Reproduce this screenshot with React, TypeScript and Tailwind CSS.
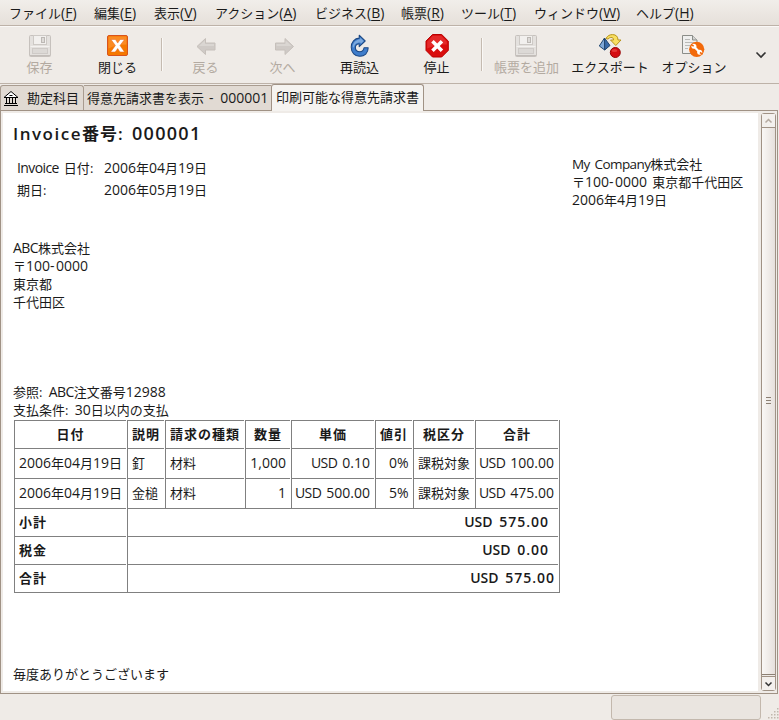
import React from 'react';

/* Digits, letters and kanji/kana run at slightly different sizes and tracking. */
function T({ children, bold, big, tight }: { children: string; bold?: boolean; big?: boolean; tight?: boolean }) {
  const runs = children.match(/-|: ?|[0-9.,]+|[^\x20-\x7e]+|[^0-9.,:\-\u0080-\uffff]+/g) ?? [];
  const digit = big ? 'text-[18px] tracking-[1.3px]' : bold ? 'text-[14px] tracking-[1px]' : 'text-[14px]';
  const latin = big
    ? 'tracking-[1.5px]'
    : bold
      ? 'text-[14px] tracking-[0px] [word-spacing:3px]'
      : tight
        ? 'text-[13.5px] tracking-[-0.6px] [word-spacing:2px]'
        : 'text-[14px] tracking-[-0.6px] [word-spacing:2px]';
  const colon = big ? 'tracking-[1.5px] [word-spacing:2px]' : 'tracking-[0.5px] [word-spacing:2px]';
  const cjk = big || bold ? 'tracking-[1px]' : '';
  const style = (r: string) =>
    r === '-' ? 'text-[14px] tracking-[1.5px]' : r[0] === ':' ? colon : /^[0-9.,]/.test(r) ? digit : r.charCodeAt(0) < 127 ? latin : cjk;
  return (
    <span className="whitespace-pre">
      {runs.map((r, i) => (
        <span key={i} className={style(r)}>{r}</span>
      ))}
    </span>
  );
}

const menus = [
  { t: 'ファイル', k: 'F', w: 'w-[85px]' },
  { t: '編集', k: 'E', w: 'w-[60px]' },
  { t: '表示', k: 'V', w: 'w-[61px]' },
  { t: 'アクション', k: 'A', w: 'w-[100px]' },
  { t: 'ビジネス', k: 'B', w: 'w-[86px]' },
  { t: '帳票', k: 'R', w: 'w-[60px]' },
  { t: 'ツール', k: 'T', w: 'w-[73px]' },
  { t: 'ウィンドウ', k: 'W', w: 'w-[102px]' },
  { t: 'ヘルプ', k: 'H', w: 'w-[70px]' },
];

function Floppy() {
  return (
    <svg width="25" height="24" viewBox="-1 0 25 24">
      <rect x="1.5" y="1.5" width="21" height="21" rx="1" fill="#e4e1de" stroke="#c6c1bd" />
      <rect x="5.5" y="1.5" width="13" height="9" fill="#f2f0ee" stroke="#cdc9c5" />
      <rect x="13.5" y="3.5" width="3" height="5" fill="#dedbd8" stroke="#bcb8b4" />
      <path d="M2.5 12.5h19" stroke="#f4f2f0" />
      <rect x="4.5" y="14.5" width="15" height="5" fill="#dcd9d6" stroke="#cecac7" />
      <path d="M2 21.5h20" stroke="#c2bdb9" />
    </svg>
  );
}
function CloseIcon() {
  return (
    <svg width="25" height="24" viewBox="-1 0 25 24">
      <rect x="1.5" y="1.5" width="20" height="20" rx="1.5" fill="#f57900" stroke="#d9531c" />
      <path d="M2.500 2.500h18v8c-6 0-12 1-18 4z" fill="#ff9a42" opacity=".55" />
      <path d="M5 5.500h4.500l2.200 3.600 2.400-3.600h4.400l-4.500 6 4.500 6.500H14l-2.300-3.500L9.200 18H4.700l4.700-6.500z" fill="#fff" stroke="#e8641a" strokeWidth=".5" />
    </svg>
  );
}
function Arrow({ flip }: { flip?: boolean }) {
  return (
    <svg width="25" height="24" viewBox="-1 0 25 24">
      <g transform={flip ? 'matrix(-1 0 0 1 25.5 0)' : undefined}>
        <path d="M3 12.500 11.500 4.500V9H21v7h-9.500v4.500z" fill="#cfcac6" stroke="#c6c0bb" strokeLinejoin="round" />
        <path d="M5 12 11 6.500V10h9v2z" fill="#dad6d2" />
      </g>
    </svg>
  );
}
function Reload() {
  return (
    <svg width="25" height="24" viewBox="-1 0 25 24">
      <g transform="translate(-.3 -.7) scale(1 1.07)">
        <path d="M20.500 13.500c0 5-3.700 8-8.300 8-5 0-8.700-3.500-8.700-8.500 0-4.800 3.500-8.200 8-8.500V1.800l6 5.400-6 5.300V9.700c-2.300.2-3.800 1.500-3.800 3.600 0 2.300 1.800 3.900 4.400 3.900 2.300 0 3.900-1.300 4.200-3.700z" fill="#3f7dcb" stroke="#1d4883" strokeLinejoin="round" />
        <path d="M5 12.500c.4-4 3.500-6.500 7.500-6.900V4.200L16 7.300l-2.500 2.200-1-1c-4 0-6 2-6.300 5z" fill="#93b9e4" opacity=".75" />
      </g>
    </svg>
  );
}
function Stop() {
  return (
    <svg width="25" height="24" viewBox="-1 0 25 24">
      <path d="M7.500.5h9.200l6.600 6.600v9.300L16.700 23H7.500L1 16.400V7.100z" fill="#d90d0d" stroke="#b90000" strokeLinejoin="round" />
      <path d="M7.800 1.800h8.400l5.600 5.600v3.200C15 10 8 12 2.200 14.500V7.400z" fill="#f04545" opacity=".5" />
      <path d="m8.700 5.900 3.500 3.500 3.500-3.500 2.500 2.500-3.500 3.500 3.500 3.500-2.500 2.500-3.500-3.500-3.500 3.500-2.500-2.500 3.500-3.500-3.500-3.500z" fill="#fff" />
    </svg>
  );
}
function Export() {
  return (
    <svg width="24" height="24" viewBox="0 0 24 24">
      <path d="M6.500 4 1.300 12l5.400 4z" fill="#7fa8d8" stroke="#20456f" strokeLinejoin="round" />
      <path d="M6.500 4 12 11.500 6.700 16z" fill="#3869a8" stroke="#20456f" strokeLinejoin="round" />
      <path d="M8 4.500C9.500 1.500 12 .6 14.500.6c3.500 0 5.500 2 5.500 5.400h3l-5.200 5.500L12.500 6h3c0-2-1-2.700-2.700-2.500-1 .1-2 .6-2.800 1.600z" fill="#f8df62" stroke="#b8941c" strokeLinejoin="round" />
      <circle cx="17.300" cy="18.500" r="5" fill="#d40d12" stroke="#970505" />
      <ellipse cx="16.500" cy="16.500" rx="2.800" ry="1.600" fill="#ef5350" opacity=".6" />
    </svg>
  );
}
function Options() {
  return (
    <svg width="24" height="24" viewBox="0 0 24 24">
      <path d="M.5 1.500h10l4.500 4.500v13.500H.5z" fill="#efefee" stroke="#8b8d88" />
      <path d="M10.500 1.500V6H15" fill="#d4d4d2" stroke="#8b8d88" />
      <path d="M3 5.500h5M3 8.500h9M3 11.500h5M3 14.500h3" stroke="#b9bab7" />
      <circle cx="14.700" cy="15.300" r="7.600" fill="#f2690a" />
      <path d="m12.200 12.700 5.200 5.400" stroke="#fff" strokeWidth="2.200" />
      <circle cx="11.900" cy="12.300" r="2.500" fill="#fff" />
      <circle cx="17.700" cy="18.300" r="2.500" fill="#fff" />
      <path d="m9 10.500 2.700 1.700M20.600 20.200l-2.700-1.700" stroke="#f2690a" strokeWidth="1.500" />
    </svg>
  );
}

function Tool({ w, icon, label, off }: { w: string; icon: React.ReactNode; label: string; off?: boolean }) {
  return (
    <div className={`${w} flex shrink-0 flex-col items-center pt-[7px] ${off ? 'text-[#b3aaa1]' : ''}`}>
      {icon}
      <div className="h-[18px] leading-[18px]"><T>{label}</T></div>
    </div>
  );
}
function Sep() {
  return <div className="mt-[11px] h-[33px] w-[2px] shrink-0 border-r border-l border-l-[#c5bbb1] border-r-[#faf8f6]" />;
}

const cols = 'grid grid-cols-[113px_38px_80px_46px_84px_38px_62px_84px]';
const cell = 'mr-px border-t border-l border-[#808080] px-1 flex items-center';
const rows = [
  ['2006年04月19日', '釘', '材料', '1,000', 'USD 0.10', '0%', '課税対象', 'USD 100.00'],
  ['2006年04月19日', '金槌', '材料', '1', 'USD 500.00', '5%', '課税対象', 'USD 475.00'],
];

function Chevron({ up }: { up?: boolean }) {
  return (
    <svg width="9" height="6" viewBox="0 0 9 6">
      <path d={up ? 'M1.500 4.500 4.500 1.500l3 3' : 'M1.500 1.500l3 3 3-3'} fill="none" stroke="currentColor" strokeWidth="1.500" />
    </svg>
  );
}

export default function App() {
  return (
    <div className="flex h-[720px] w-[779px] flex-col overflow-hidden bg-[#efebe7] font-['Open_Sans','Noto_Sans_CJK_JP',sans-serif] text-[13px] leading-[18px] text-[#1a1a1a]">
      <div className="flex h-[26px] shrink-0 border-b border-[#bdb2a8] bg-linear-to-b from-[#f1eeea] to-[#e6e0da] pt-1 pl-[9px]">
        {menus.map((m) => (
          <div key={m.k} className={`${m.w} shrink-0 whitespace-nowrap`}>
            {m.t}<span className="text-[14px]">(<span className="underline underline-offset-2">{m.k}</span>)</span>
          </div>
        ))}
      </div>

      <div className="flex h-[58px] shrink-0 border-t border-b border-t-[#faf8f6] border-b-[#bdb2a8]">
        <Tool w="w-[79px]" icon={<Floppy />} label="保存" off />
        <Tool w="w-[77px]" icon={<div className="-ml-px"><CloseIcon /></div>} label="閉じる" />
        <div className="w-[5px]" /><Sep /><div className="w-[4px]" />
        <Tool w="w-[77px]" icon={<Arrow />} label="戻る" off />
        <Tool w="w-[77px]" icon={<Arrow flip />} label="次へ" off />
        <Tool w="w-[77px]" icon={<Reload />} label="再読込" />
        <Tool w="w-[77px]" icon={<Stop />} label="停止" />
        <div className="w-[6px]" /><Sep /><div className="w-[5px]" />
        <Tool w="w-[77px]" icon={<div className="-ml-[2px]"><Floppy /></div>} label="帳票を追加" off />
        <Tool w="w-[90px]" icon={<Export />} label="エクスポート" />
        <Tool w="w-[78px]" icon={<Options />} label="オプション" />
        <svg width="12" height="8" viewBox="0 0 12 8" className="mt-[24px] ml-[22px] shrink-0">
          <path d="m1.500 1.500 4.500 4.500 4.500-4.500" fill="none" stroke="#333" strokeWidth="1.600" />
        </svg>
      </div>

      <div className="flex h-[26px] shrink-0 items-end">
        <div className="flex h-[25px] w-[84px] items-center rounded-t-[3px] border-t border-r border-l border-[#a99c90] bg-[#e1dad3] pl-[2px]">
          <svg width="16" height="16" viewBox="0 0 16 16" className="mr-2">
            <path d="M1 7.500 8 1.500l7 6z" fill="#fff" stroke="#000" />
            <path d="M3.500 8v5M6.500 8v5M9.500 8v5M12.500 8v5M2 13.500h12M1 15.500h14" stroke="#000" />
            <path d="M6.500 5.500h3" stroke="#000" />
          </svg>
          <T>勘定科目</T>
        </div>
        <div className="flex h-[25px] w-[187px] items-center border-t border-[#a99c90] bg-[#e1dad3] pl-[3px]">
          <T>得意先請求書を表示 - 000001</T>
        </div>
        <div className="z-10 -mb-px flex h-[27px] w-[153px] items-center rounded-t-[3px] border-t border-r border-l border-[#a09285] bg-[#f5f3f0] pb-[3px] pl-1">
          <T>印刷可能な得意先請求書</T>
        </div>
      </div>

      <div className="flex h-[584px] w-[778px] shrink-0 border border-[#a09285] pt-[2px] pb-[2px] pl-[2px]">
        <div className="w-[755px] shrink-0 bg-white pl-[10px]">
          <div className="h-[45px] pt-[9px] text-[17px] leading-[22px] font-semibold"><T big>Invoice番号: 000001</T></div>
          <div className="flex h-[81px] justify-between">
            <div className="pl-1 pt-[1px]">
              <div className="flex h-[22px]"><div className="w-[87px]"><T>Invoice 日付:</T></div><T>2006年04月19日</T></div>
              <div className="flex h-[22px]"><div className="w-[87px]"><T>期日:</T></div><T>2006年05月19日</T></div>
            </div>
            <div className="-mt-[3px] w-[186px]">
              <div><T tight>My Company株式会社</T></div>
              <div><T>〒100-0000 東京都千代田区</T></div>
              <div><T>2006年4月19日</T></div>
            </div>
          </div>
          <div className="h-[144px]">
            <div><T>ABC株式会社</T></div>
            <div><T>〒100-0000</T></div>
            <div>東京都</div>
            <div>千代田区</div>
          </div>
          <div><T>参照: ABC注文番号12988</T></div>
          <div><T>支払条件: 30日以内の支払</T></div>
          <div className="mt-px ml-px w-[546px] border-r border-b border-[#808080]">
            <div className={`${cols} h-[28px] font-bold`}>
              {['日付', '説明', '請求の種類', '数量', '単価', '値引', '税区分', '合計'].map((h) => (
                <div key={h} className={`${cell} justify-center pb-[2px]`}><T bold>{h}</T></div>
              ))}
            </div>
            {rows.map((r, i) => (
              <div key={i} className={`${cols} h-[30px]`}>
                {r.map((v, j) => (
                  <div key={j} className={`${cell} pb-px ${j < 3 ? '' : j === 6 ? 'justify-center' : 'justify-end'}`}><T>{v}</T></div>
                ))}
              </div>
            ))}
            {[['小計', 'USD 575.00', 'pr-[9px]!'], ['税金', 'USD 0.00', 'pr-[9px]!'], ['合計', 'USD 575.00', 'pr-[3px]!']].map(([a, b, p]) => (
              <div key={a} className="grid h-[28px] grid-cols-[113px_432px] font-bold">
                <div className={`${cell} pb-px`}><T bold>{a}</T></div>
                <div className={`${cell} ${p} justify-end pb-px font-semibold`}><T bold>{b}</T></div>
              </div>
            ))}
          </div>
          <div className="pt-[72px]">毎度ありがとうございます</div>
        </div>
        <div className="ml-[3px] flex w-[15px] flex-col rounded-[3px] border border-[#a09285] bg-[#efebe7]">
          <div className="flex h-[14px] items-center justify-center border-b border-[#a09285] bg-[#f3f0ed] text-[#b5aaa0]"><Chevron up /></div>
          <div className="flex flex-1 flex-col items-center justify-center gap-[2px] border-b border-[#8c8074] bg-linear-to-r from-[#faf8f6] to-[#e6e0dc] pb-[2px]">
            <div className="h-px w-[5px] bg-[#8c8074]" /><div className="h-px w-[5px] bg-[#8c8074]" /><div className="h-px w-[5px] bg-[#8c8074]" />
          </div>
          <div className="mt-px flex h-[14px] items-center justify-center border-t border-[#a09285] bg-[#f3f0ed] text-[#333]"><Chevron /></div>
        </div>
      </div>

      <div className="flex flex-1 justify-end pt-px">
        <div className="h-[25px] w-[150px] rounded-[3px] border border-[#c3b8ad] bg-[#eae5e0]" />
        <svg width="18" height="25" viewBox="0 0 18 25">
          {[0, 1, 2, 3].map((r) =>
            Array.from({ length: r + 1 }, (_, c) => (
              <rect key={`${r}-${c}`} x={16 - c * 3} y={13 + r * 3} width="1.500" height="1.500" fill="#c1b7ad" />
            )),
          )}
        </svg>
      </div>
    </div>
  );
}
